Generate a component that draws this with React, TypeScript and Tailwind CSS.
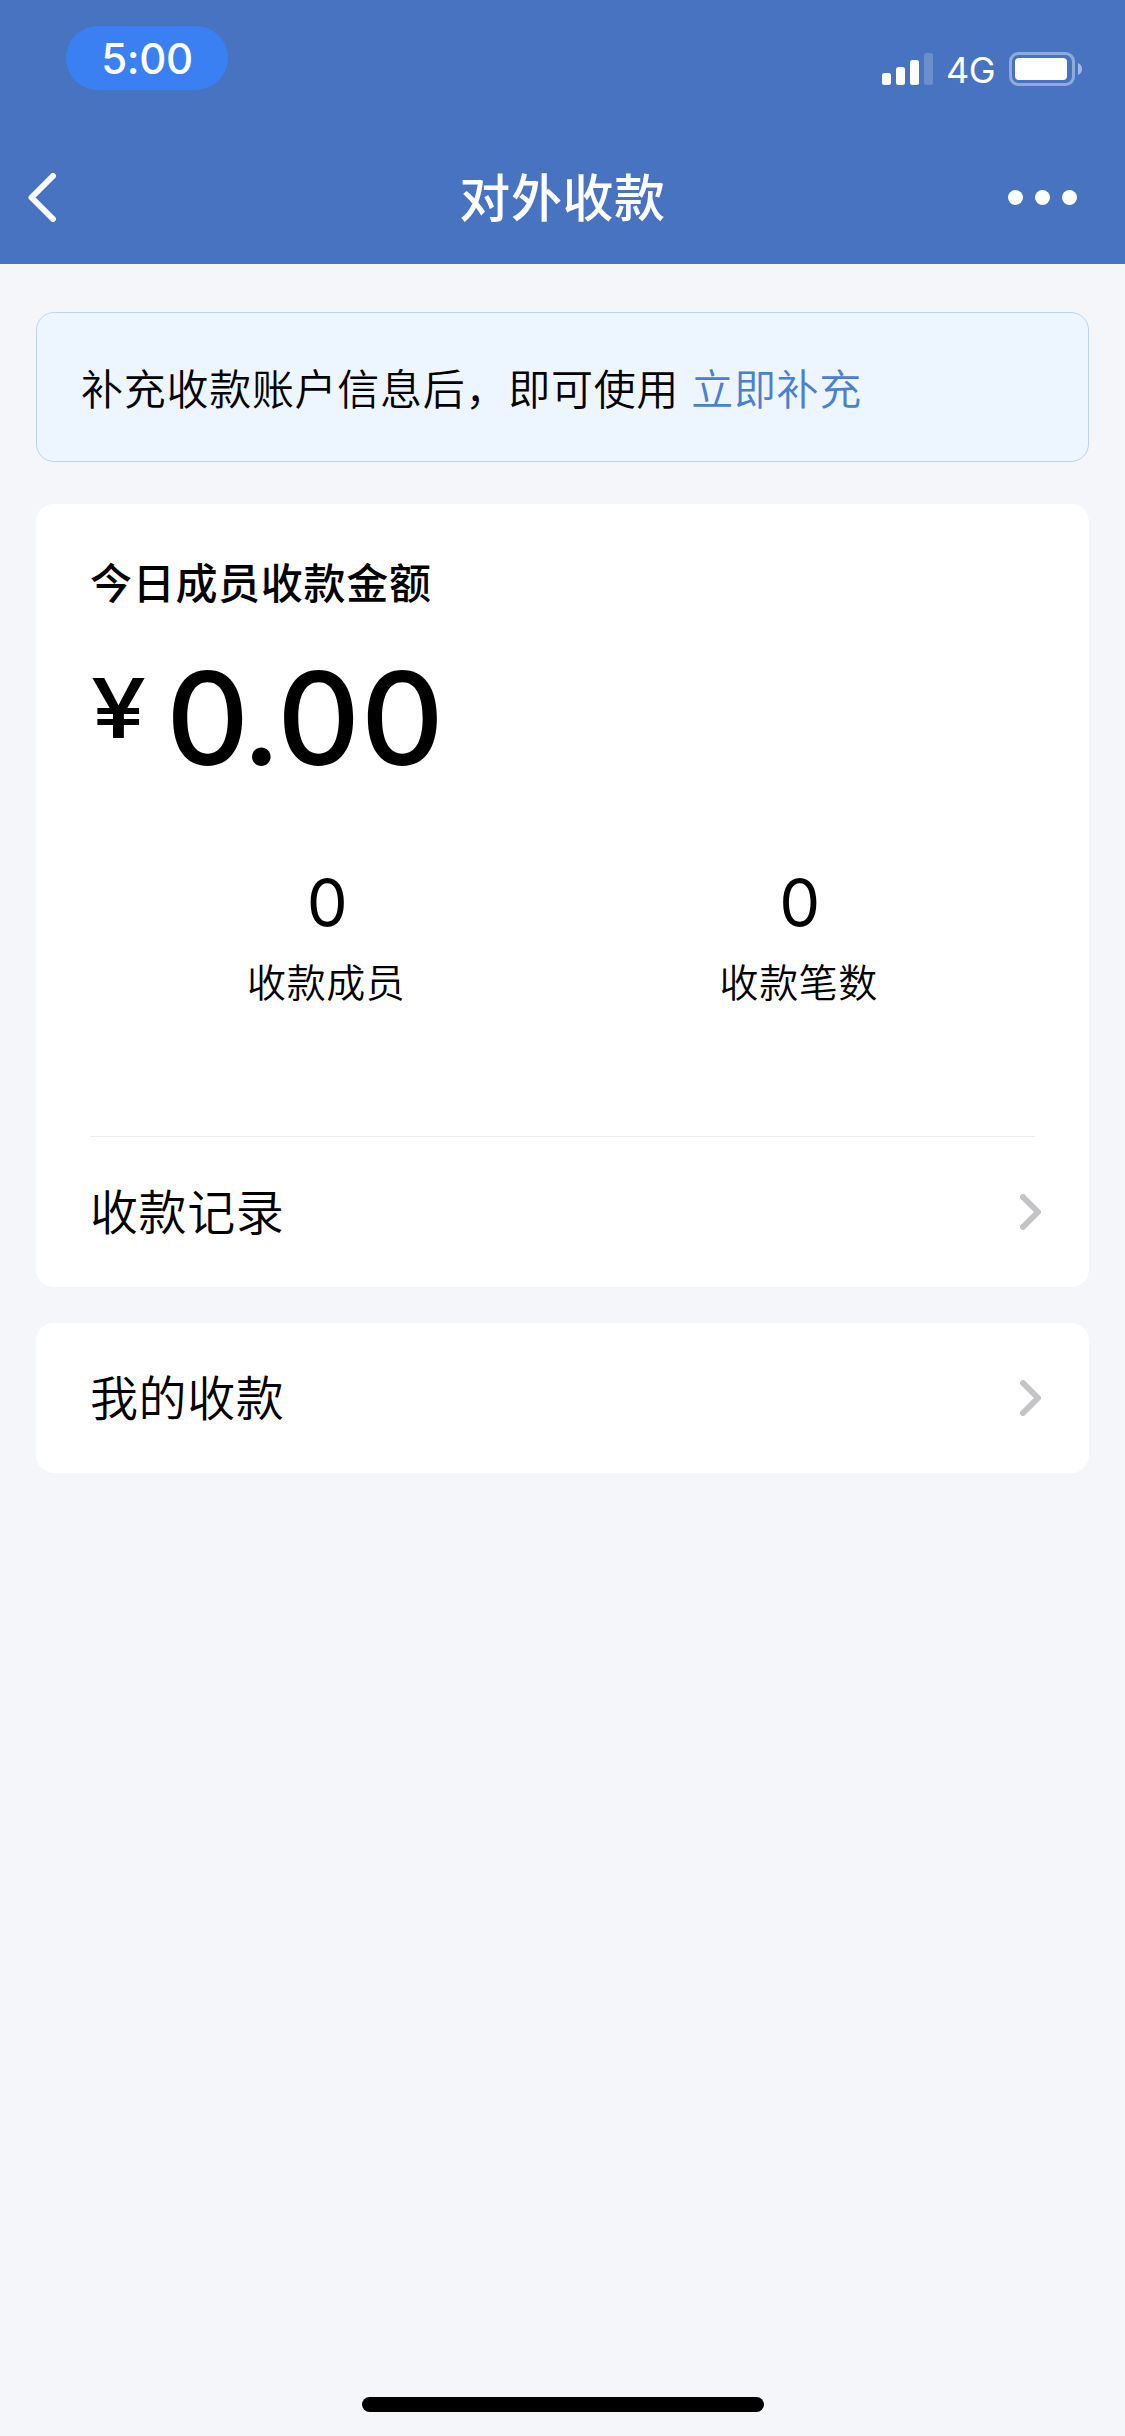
interface StatProps {
  value: string;
  label: string;
}

function SignalIcon() {
  return (
    <svg width="51" height="32" viewBox="0 0 51 32" fill="white">
      <rect x="0" y="20" width="9" height="12" rx="2.5" />
      <rect x="14" y="14" width="9" height="18" rx="2.5" />
      <rect x="28" y="7" width="9" height="25" rx="2.5" />
      <rect x="42" y="0" width="9" height="32" rx="2.5" opacity="0.2" />
    </svg>
  );
}

function BatteryIcon() {
  return (
    <svg width="73" height="34" viewBox="0 0 73 34" fill="none">
      <rect x="1.5" y="1.5" width="63" height="31" rx="8" stroke="white" strokeOpacity="0.4" strokeWidth="3" />
      <rect x="6" y="6" width="52" height="22" rx="4" fill="white" />
      <path d="M69 11c2.5 1 4 3.3 4 6s-1.5 5-4 6z" fill="white" fillOpacity="0.5" />
    </svg>
  );
}

function ChevronRight() {
  return (
    <svg width="21" height="36" viewBox="0 0 21 36" fill="none">
      <path d="M3 3l15 15L3 33" stroke="#c4c4c6" strokeWidth="6" strokeLinecap="round" strokeLinejoin="round" />
    </svg>
  );
}

function Stat({ value, label }: StatProps) {
  return (
    <div className="flex flex-1 flex-col items-center">
      <div className="h-[78px] pl-[2px] font-['Inter',sans-serif] text-[65px] leading-[78px] font-normal">{value}</div>
      <div className="mt-[11px] text-[39px] leading-[54px] tracking-[0.6px]">{label}</div>
    </div>
  );
}

function LinkRow({ label }: { label: string }) {
  return (
    <div className="flex h-[150px] items-center justify-between pr-[48px] pl-[54px]">
      <span className="pb-[7px] text-[48px] leading-[66px] tracking-[0.6px]">{label}</span>
      <ChevronRight />
    </div>
  );
}

export default function App() {
  return (
    <div className="flex h-[2436px] w-[1125px] flex-col bg-[#f4f6fa] font-['Noto_Sans_CJK_SC',sans-serif] font-[350] text-black">
      <header className="h-[264px] bg-[#4873c0] text-white">
        <div className="flex h-[132px] items-start justify-between pr-[43px] pl-[66px]">
          <div className="mt-[26px] flex h-[64px] w-[162px] items-center justify-center rounded-full bg-[#3a80f2] font-['Inter',sans-serif] text-[42px] font-[450] tracking-[-0.3px]">
            5:00
          </div>
          <div className="mt-[52px] flex h-[34px] items-center">
            <SignalIcon />
            <span className="mt-[2px] mr-[14px] ml-[13px] font-['Inter',sans-serif] text-[36px] font-normal tracking-[-0.5px]">4G</span>
            <BatteryIcon />
          </div>
        </div>
        <div className="flex h-[131px] items-center justify-between pr-[48px] pl-[28px]">
          <svg className="mr-[61px]" width="28" height="49" viewBox="0 0 28 49" fill="none">
            <path d="M25 3L3.5 24.5L25 46" stroke="white" strokeWidth="6" strokeLinecap="round" strokeLinejoin="round" />
          </svg>
          <h1 className="pb-[4px] text-[51px] font-medium tracking-[0.6px]">对外收款</h1>
          <div className="flex gap-[12px]">
            <i className="size-[15px] rounded-full bg-white" />
            <i className="size-[15px] rounded-full bg-white" />
            <i className="size-[15px] rounded-full bg-white" />
          </div>
        </div>
      </header>

      <main className="flex flex-1 flex-col px-[36px] pt-[48px]">
        <div className="flex h-[150px] items-center rounded-[18px] border border-[#b8d6ee] bg-[#edf5fe] pl-[44px] text-[42px] tracking-[0.72px]">
          <p className="pb-[2px]">
            补充收款账户信息后，即可使用 <a className="ml-[2px] text-[#4a80cc]">立即补充</a>
          </p>
        </div>

        <section className="mt-[42px] h-[783px] rounded-[18px] bg-white">
          <div className="flex h-[632px] flex-col px-[54px] pt-[48px]">
            <h2 className="text-[42px] leading-[58px] font-medium tracking-[0.7px]">今日成员收款金额</h2>
            <div className="mt-[28px] flex h-[160px] items-start font-['Inter',sans-serif] font-medium">
              <span className="mt-[20px] ml-[1px] w-[75px] shrink-0 origin-left scale-x-[1.19] text-[83px] leading-[100px]">¥</span>
              <span className="mt-[2px] text-[129px] leading-[156px]">
                <span className="tracking-[-4px]">0.</span>
                <span className="tracking-[0.5px]">00</span>
              </span>
            </div>
            <div className="mt-[66px] flex">
              <Stat value="0" label="收款成员" />
              <Stat value="0" label="收款笔数" />
            </div>
          </div>
          <div className="mx-[54px] h-px bg-[#ececec]" />
          <LinkRow label="收款记录" />
        </section>

        <section className="mt-[36px] rounded-[18px] bg-white">
          <LinkRow label="我的收款" />
        </section>
      </main>

      <footer className="flex h-[39px] items-start justify-center">
        <div className="h-[15px] w-[402px] rounded-full bg-black" />
      </footer>
    </div>
  );
}
